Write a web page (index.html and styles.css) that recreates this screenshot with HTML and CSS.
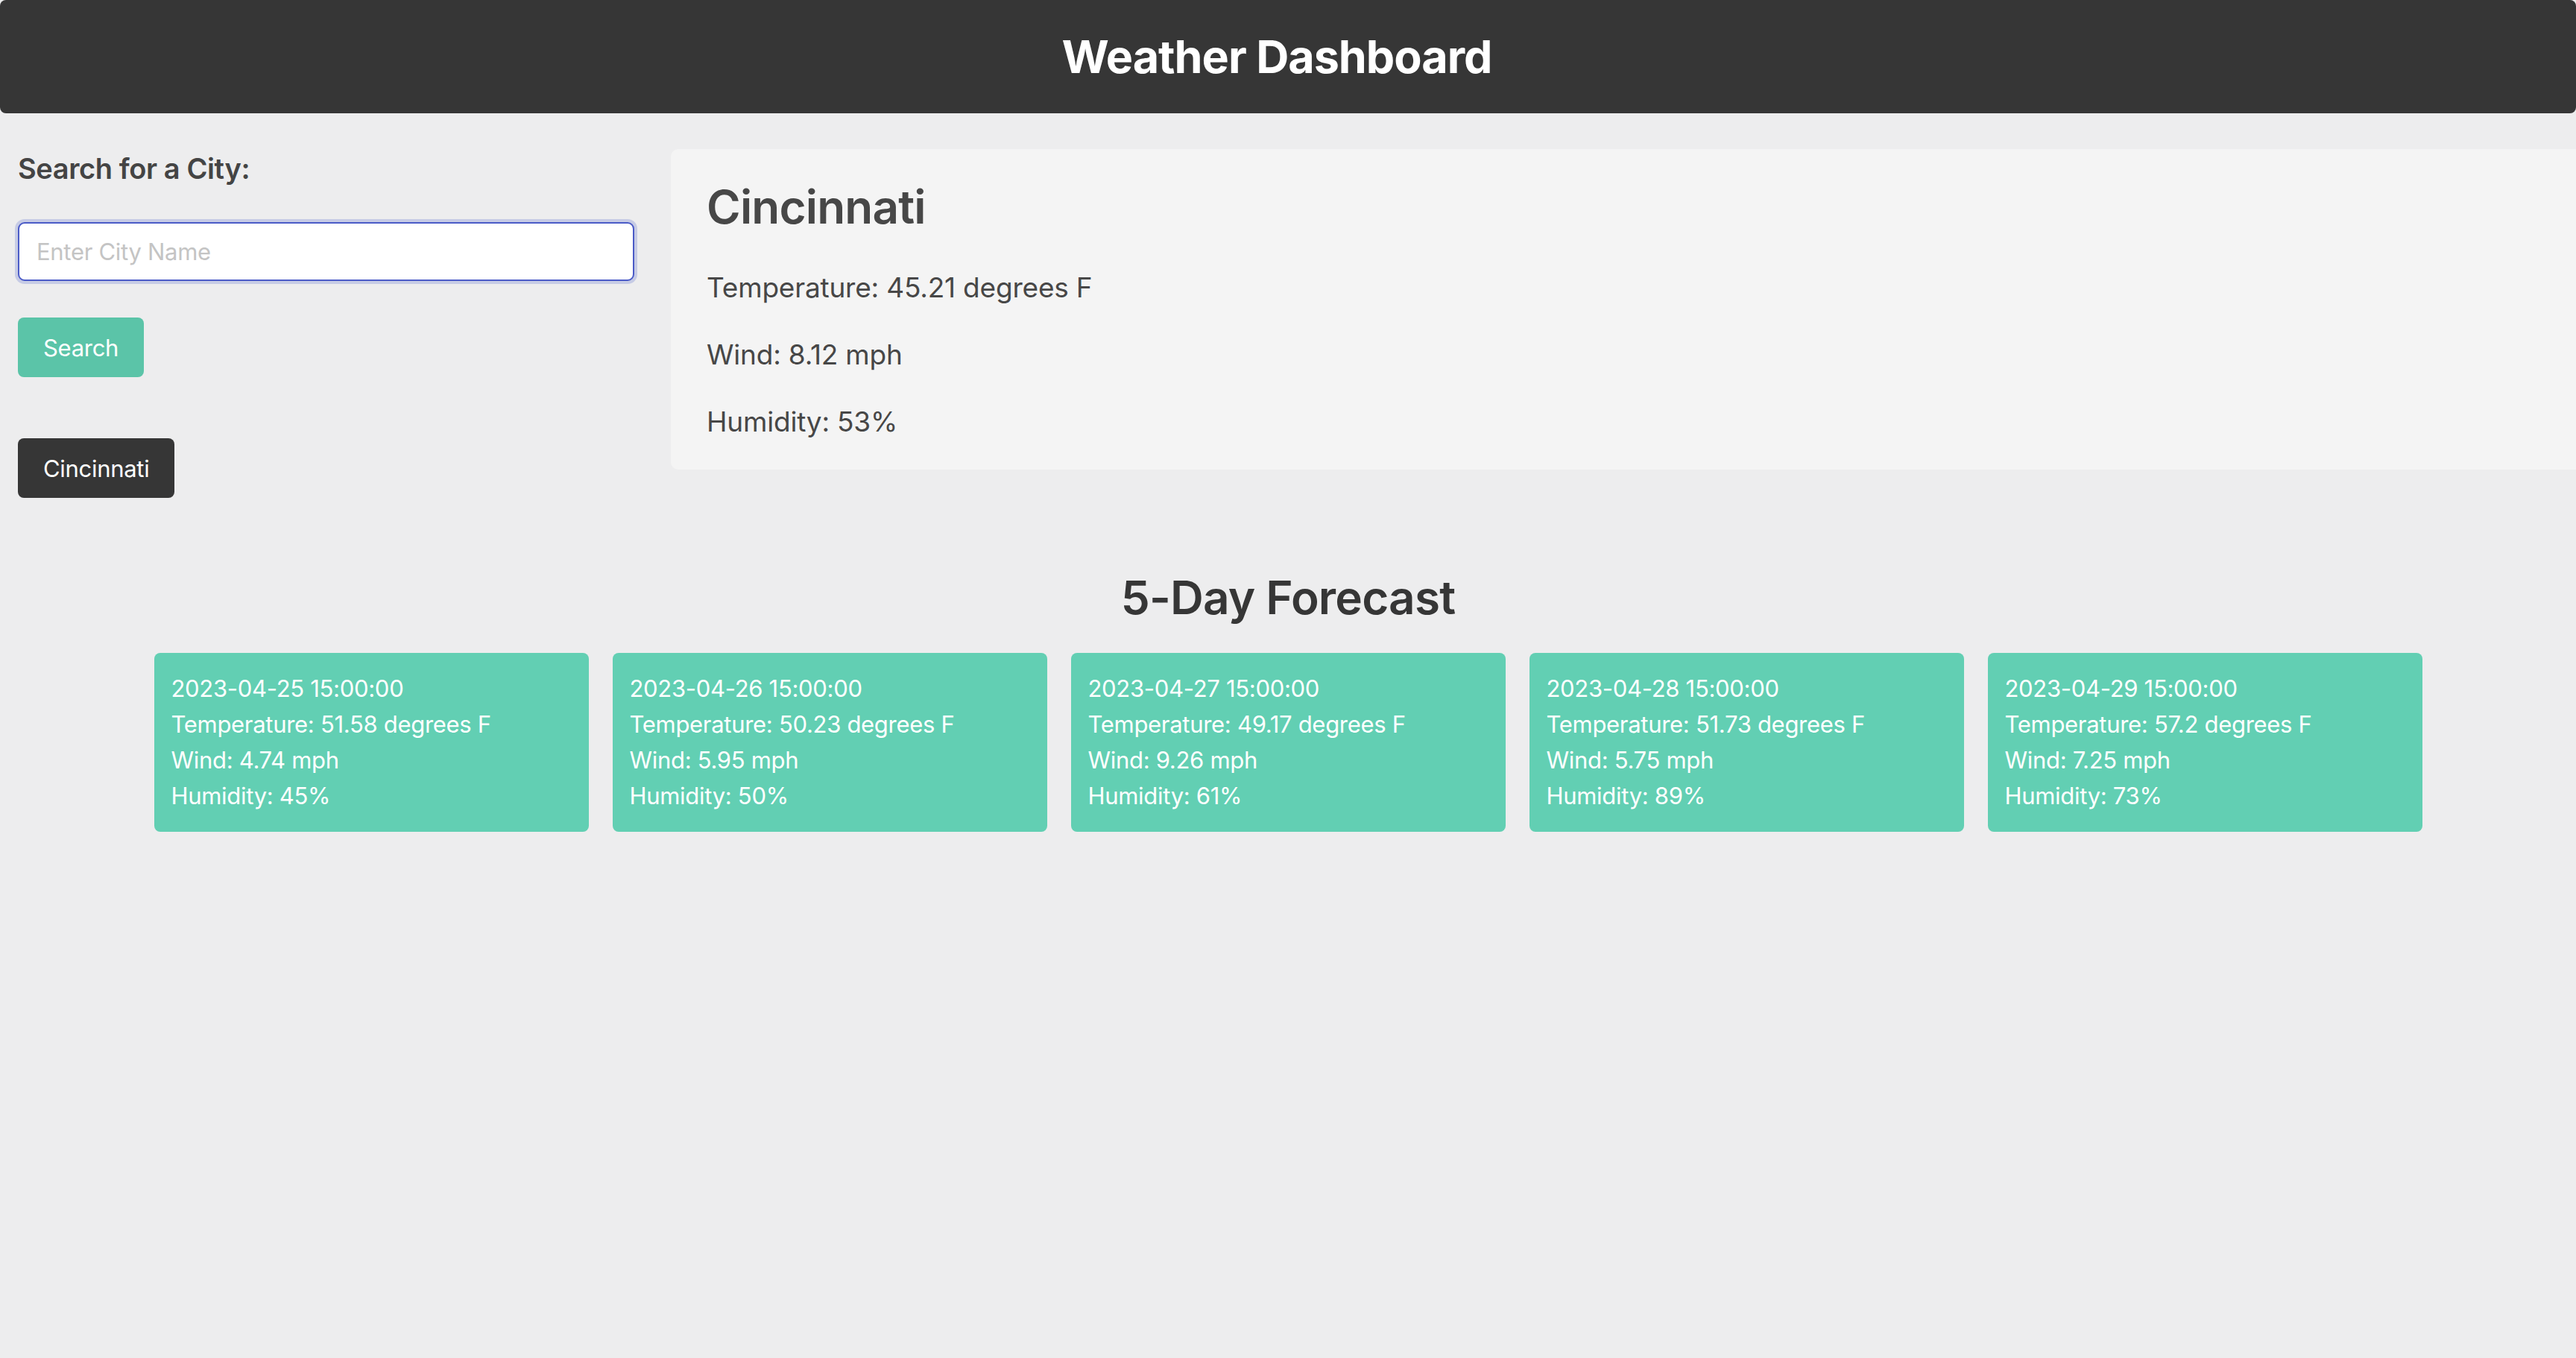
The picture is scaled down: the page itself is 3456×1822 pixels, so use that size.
FILE: index.html
```html
<!DOCTYPE html>
<html lang="en">
<head>
<meta charset="utf-8">
<title>Weather Dashboard</title>
<link rel="stylesheet" href="styles.css">
</head>
<body>
<header class="topbar">
  <h1 class="title">Weather Dashboard</h1>
</header>
<main class="main">
  <aside class="sidebar">
    <h3 class="search-label">Search for a City:</h3>
    <input class="city-input" type="text" placeholder="Enter City Name">
    <div class="search-row"><button class="btn btn-search">Search</button></div>
    <div class="history"><button class="btn btn-history">Cincinnati</button></div>
  </aside>
  <section class="current">
    <h2 class="city-name">Cincinnati</h2>
    <p class="stat">Temperature: 45.21 degrees F</p>
    <p class="stat">Wind: 8.12 mph</p>
    <p class="stat">Humidity: 53%</p>
  </section>
</main>
<section class="forecast">
  <h2 class="forecast-title">5-Day Forecast</h2>
  <div class="cards">
    <div class="card"><p>2023-04-25 15:00:00</p><p>Temperature: 51.58 degrees F</p><p>Wind: 4.74 mph</p><p>Humidity: 45%</p></div>
    <div class="card"><p>2023-04-26 15:00:00</p><p>Temperature: 50.23 degrees F</p><p>Wind: 5.95 mph</p><p>Humidity: 50%</p></div>
    <div class="card"><p>2023-04-27 15:00:00</p><p>Temperature: 49.17 degrees F</p><p>Wind: 9.26 mph</p><p>Humidity: 61%</p></div>
    <div class="card"><p>2023-04-28 15:00:00</p><p>Temperature: 51.73 degrees F</p><p>Wind: 5.75 mph</p><p>Humidity: 89%</p></div>
    <div class="card"><p>2023-04-29 15:00:00</p><p>Temperature: 57.2 degrees F</p><p>Wind: 7.25 mph</p><p>Humidity: 73%</p></div>
  </div>
</section>
</body>
</html>
```
FILE: styles.css
```css
* { box-sizing: border-box; }

html, body {
  margin: 0;
  padding: 0;
}

body {
  background: #ededee;
  font-family: Inter, "Noto Sans", "Liberation Sans", sans-serif;
  color: #444444;
  min-height: 1822px;
}

.topbar {
  height: 152px;
  background: #363636;
  border-radius: 8px;
  display: flex;
  align-items: center;
  justify-content: center;
  padding-right: 30px;
}

.title {
  margin: 0;
  color: #ffffff;
  font-size: 61px;
  font-weight: 700;
  line-height: 76px;
  letter-spacing: -1px;
}

.main {
  display: flex;
  align-items: flex-start;
  padding-top: 48px;
}

.sidebar {
  width: 900px;
  flex-shrink: 0;
  padding: 3px 49px 0 24px;
  display: flex;
  flex-direction: column;
  align-items: flex-start;
}

.search-label {
  margin: 0;
  font-size: 38px;
  line-height: 46px;
  font-weight: 600;
  color: #444444;
  letter-spacing: -0.4px;
}

.city-input {
  margin-top: 49px;
  width: 827px;
  height: 79px;
  border: 2px solid #4b5bc7;
  border-radius: 9px;
  box-shadow: 0 0 0 4px #c6cbe5;
  background: #ffffff;
  padding: 0 23px;
  font-family: inherit;
  font-size: 31px;
  color: #444444;
  outline: none;
  letter-spacing: -0.3px;
}

.city-input::placeholder {
  color: #c4c4c4;
}

.search-row {
  margin-top: 49px;
}

.btn {
  height: 80px;
  padding: 0 34px;
  border: none;
  border-radius: 8px;
  font-family: inherit;
  font-size: 31px;
  color: #ffffff;
  letter-spacing: -0.3px;
}

.btn-search {
  background: #5bc4a8;
}

.history {
  margin-top: 82px;
}

.btn-history {
  background: #363636;
}

.current {
  flex: 1;
  background: #f4f4f4;
  border-radius: 10px 0 0 10px;
  padding: 39px 48px 40px 48px;
  color: #474747;
}

.city-name {
  margin: 0 0 46px;
  font-size: 62px;
  line-height: 77px;
  font-weight: 600;
  letter-spacing: -0.8px;
}

.stat {
  margin: 0;
  font-size: 37px;
  line-height: 48px;
  letter-spacing: -0.2px;
}

.stat + .stat {
  margin-top: 42px;
}

.forecast {
  margin-top: 95px;
}

.forecast-title {
  margin: 0 0 36px;
  text-align: center;
  font-size: 62px;
  line-height: 77px;
  font-weight: 600;
  color: #363636;
  letter-spacing: -0.8px;
}

.cards {
  display: flex;
  justify-content: center;
  gap: 32px;
}

.card {
  width: 583px;
  height: 240px;
  background: #62cfb3;
  border-radius: 8px;
  padding: 24px 23px;
  color: #ffffff;
}

.card p {
  margin: 0;
  font-size: 31px;
  line-height: 48px;
  letter-spacing: -0.3px;
}
```
